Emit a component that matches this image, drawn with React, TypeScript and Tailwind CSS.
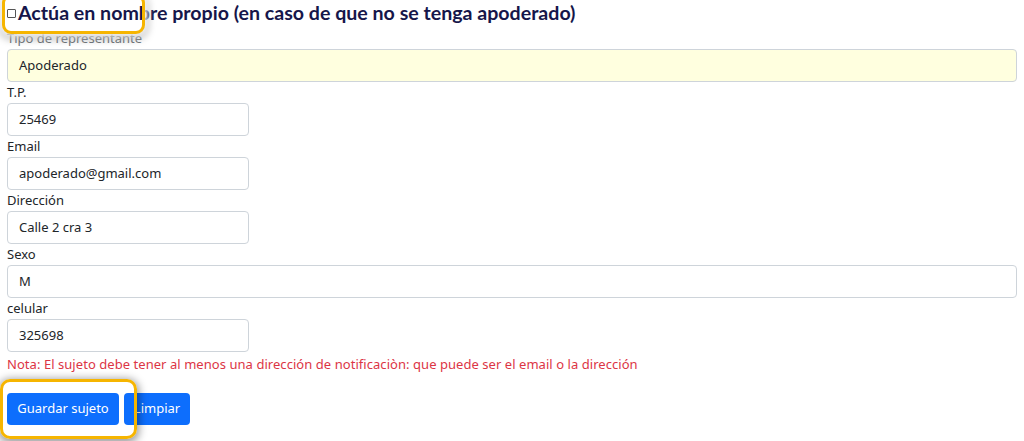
import React from "react";

const font = { fontFamily: '"Noto Sans", "Open Sans", sans-serif' };

function Field({ label, value, full, bg, labelClass }: { label: string; value: string; full?: boolean; bg?: string; labelClass?: string }) {
  return (
    <div className="flex flex-col">
      <div className={`h-[21px] leading-[21px] text-[13px] ${labelClass ?? "text-[#212529]"}`}>{label}</div>
      <div
        className={`h-[33px] flex items-center pl-[11px] text-[13px] text-[#212529] border border-[#ced4da] rounded-[4px] ${full ? "w-full" : "w-[242px]"} ${bg ?? "bg-white"}`}
      >
        {value}
      </div>
    </div>
  );
}

export default function App() {
  return (
    <div className="relative w-[1024px] h-[441px] bg-white overflow-hidden" style={font}>
      <div className="flex flex-col px-[7px] pr-[7px]">
        <div className="h-[28px] flex items-start pt-[1px]">
          <span className="mt-[8px] w-[9px] h-[9px] border border-[#555] rounded-[1px] bg-white shrink-0" />
          <span className="text-[19.6px] font-bold leading-[24px] text-[#16164a] ml-[2px] font-['Lato',sans-serif]">
            Actúa en nombre propio (en caso de que no se tenga apoderado)
          </span>
        </div>
        <Field label="Tipo de representante" value="Apoderado" full bg="bg-[#ffffdf]" labelClass="text-[#6f7479]" />
        <Field label="T.P." value="25469" />
        <Field label="Email" value="apoderado@gmail.com" />
        <Field label="Dirección" value="Calle 2 cra 3" />
        <Field label="Sexo" value="M" full />
        <Field label="celular" value="325698" />
        <div className="text-[13px] leading-[21px] mt-[2px] text-[#dc3545] tracking-[0.05px]">
          Nota: El sujeto debe tener al menos una dirección de notificaciòn: que puede ser el email o la dirección
        </div>
        <div className="flex gap-[5px] mt-[18px]">
          <button className="h-[32px] w-[112px] bg-[#0d6efd] text-white text-[13px] rounded-[4px]">Guardar sujeto</button>
          <button className="h-[32px] w-[66px] bg-[#0d6efd] text-white text-[13px] rounded-[4px]">Limpiar</button>
        </div>
      </div>
      <div className="absolute left-[2px] top-[-6px] w-[143px] h-[40px] rounded-[9px] border-[3px] border-[#f6b500] shadow-[0_0_6px_3px_rgba(255,255,255,0.9),0_2px_8px_2px_rgba(0,0,0,0.4)]" />
      <div className="absolute left-[0px] top-[379px] w-[137px] h-[60px] rounded-[10px] border-[3px] border-[#f6b500] shadow-[0_2px_8px_2px_rgba(0,0,0,0.4)]" />
    </div>
  );
}
